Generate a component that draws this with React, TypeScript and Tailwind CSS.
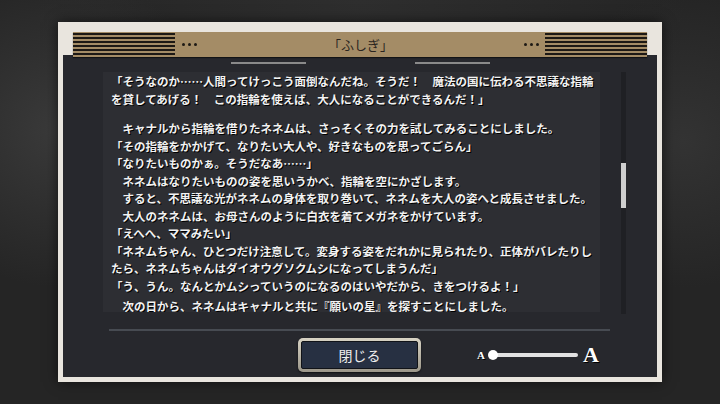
const lines: string[] = [
  "「そうなのか……人間ってけっこう面倒なんだね。そうだ！　魔法の国に伝わる不思議な指輪",
  "を貸してあげる！　この指輪を使えば、大人になることができるんだ！」",
  "",
  "　キャナルから指輪を借りたネネムは、さっそくその力を試してみることにしました。",
  "「その指輪をかかげて、なりたい大人や、好きなものを思ってごらん」",
  "「なりたいものかぁ。そうだなあ……」",
  "　ネネムはなりたいものの姿を思いうかべ、指輪を空にかざします。",
  "　すると、不思議な光がネネムの身体を取り巻いて、ネネムを大人の姿へと成長させました。",
  "　大人のネネムは、お母さんのように白衣を着てメガネをかけています。",
  "「えへへ、ママみたい」",
  "「ネネムちゃん、ひとつだけ注意して。変身する姿をだれかに見られたり、正体がバレたりし",
  "たら、ネネムちゃんはダイオウグソクムシになってしまうんだ」",
  "「う、うん。なんとかムシっていうのになるのはいやだから、きをつけるよ！」",
  "-",
  "　次の日から、ネネムはキャナルと共に『願いの星』を探すことにしました。",
];

const Stripes = () => (
  <div className="w-[102px] h-[24px] bg-[repeating-linear-gradient(to_bottom,#1d1915_0_2px,#a48c66_2px_4px)]" />
);

const Dots = () => (
  <div className="flex gap-[3px]">
    <span className="w-[3px] h-[3px] rounded-full bg-[#1d1915]" />
    <span className="w-[3px] h-[3px] rounded-full bg-[#1d1915]" />
    <span className="w-[3px] h-[3px] rounded-full bg-[#1d1915]" />
  </div>
);

export default function App() {
  return (
    <div
      className="w-[720px] h-[404px] flex items-center justify-center overflow-hidden bg-[#252525] bg-[radial-gradient(circle_at_8%_32%,#3a3a3a_0,transparent_22%),radial-gradient(circle_at_95%_35%,#333_0,transparent_20%),radial-gradient(circle_at_50%_0%,#2e2e2e_0,transparent_60%)]"
      style={{ fontFamily: '"Noto Sans CJK JP", "Noto Sans", sans-serif' }}
    >
      {/* frame */}
      <div className="w-[604px] h-[360px] bg-[#e9e5de] flex flex-col px-[5px] pb-[5px] pt-[10px] shadow-[0_0_12px_rgba(0,0,0,0.6)]">
        {/* title bar */}
        <div className="mx-[10px] h-[25px] bg-[#a48c66] flex items-center relative z-10 shadow-[0_1px_1px_rgba(0,0,0,0.5)]">
          <Stripes />
          <div className="ml-[7px]">
            <Dots />
          </div>
          <div className="flex-1 text-center text-[13px] text-[#2a2520] leading-none">「ふしぎ」</div>
          <div className="mr-[6px]">
            <Dots />
          </div>
          <Stripes />
        </div>

        {/* panel */}
        <div className="flex-1 -mt-[2px] bg-[#27282d] flex flex-col">
          <div className="pt-[7px] flex justify-center gap-[109px]">
            <div className="w-[75px] h-[2px] bg-[#8a8a8a]" />
            <div className="w-[75px] h-[2px] bg-[#8a8a8a]" />
          </div>

          <div className="mt-[8px] ml-[40px] flex items-start">
            <div className="w-[497px] h-[240px] bg-[#2d2e33] overflow-hidden pl-[8px] pt-[1px] text-[11.5px] leading-[17.5px] font-bold text-[#f2f2f2] [text-shadow:1px_1px_0_#000]">
              {lines.map((l, i) =>
                l === "" ? (
                  <div key={i} className="h-[12px]" />
                ) : l === "-" ? (
                  <div key={i} className="h-[3px]" />
                ) : (
                  <div key={i} className="whitespace-nowrap">
                    {l}
                  </div>
                )
              )}
            </div>
            <div className="ml-[21px] w-[5px] h-[242px] bg-[#1f2024]">
              <div className="mt-[91px] h-[45px] bg-[#cfcfcf]" />
            </div>
          </div>

          <div className="mt-[15px] ml-[46px] w-[501px] h-[2px] bg-[#474b52]" />

          <div className="mt-[7px] flex items-center">
            <button className="ml-[235px] w-[123px] h-[34px] rounded-[5px] p-[3px] bg-[linear-gradient(to_bottom,#d8d3c4,#9c978a)] shadow-[0_1px_2px_rgba(0,0,0,0.6)]">
              <div className="w-full h-full rounded-[2px] bg-[#273042] border border-[#111318] flex items-center justify-center text-[14px] text-[#eeeeee]">
                閉じる
              </div>
            </button>

            <div className="ml-[56px] flex items-center text-white [text-shadow:1px_1px_0_#000]" style={{ fontFamily: '"Liberation Serif", serif' }}>
              <span className="text-[11px] font-bold leading-none">A</span>
              <div className="ml-[3px] w-[10px] h-[10px] rounded-full bg-white relative z-10" />
              <div className="-ml-[4px] w-[84px] h-[4px] rounded-full bg-[#e2e2e2]" />
              <span className="ml-[5px] text-[22px] font-bold leading-none">A</span>
            </div>
          </div>
        </div>
      </div>
    </div>
  );
}
